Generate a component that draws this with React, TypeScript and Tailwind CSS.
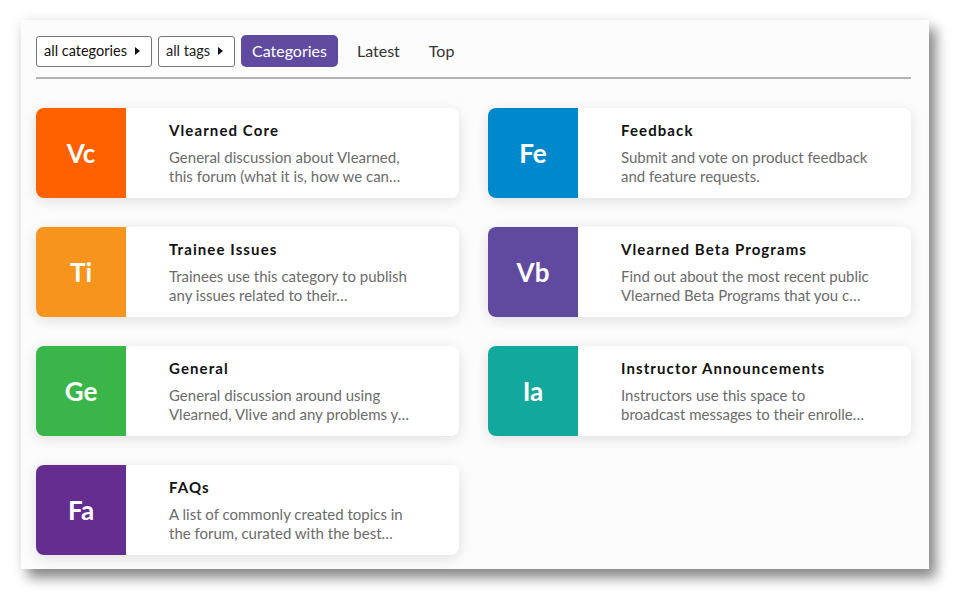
import React from "react";

const categories = [
  { abbr: "Vc", color: "bg-[#ff6000]", title: "Vlearned Core", desc: "General discussion about Vlearned, this forum (what it is, how we can…" },
  { abbr: "Fe", color: "bg-[#0088cc]", title: "Feedback", desc: "Submit and vote on product feedback and feature requests." },
  { abbr: "Ti", color: "bg-[#f7941d]", title: "Trainee Issues", desc: "Trainees use this category to publish any issues related to their…" },
  { abbr: "Vb", color: "bg-[#604a9f]", title: "Vlearned Beta Programs", desc: "Find out about the most recent public Vlearned Beta Programs that you c…" },
  { abbr: "Ge", color: "bg-[#3ab54a]", title: "General", desc: "General discussion around using Vlearned, Vlive and any problems y…" },
  { abbr: "Ia", color: "bg-[#12a89d]", title: "Instructor Announcements", desc: "Instructors use this space to broadcast messages to their enrolle…" },
  { abbr: "Fa", color: "bg-[#652d90]", title: "FAQs", desc: "A list of commonly created topics in the forum, curated with the best…" },
];

function Caret() {
  return (
    <svg width="5" height="8" viewBox="0 0 5 8" className="ml-[8px]">
      <path d="M0 0 L5 4 L0 8 Z" fill="#111" />
    </svg>
  );
}

export default function App() {
  return (
    <div
      className="w-[965px] h-[605px] bg-white pt-[20px] pl-[21px]"
      style={{ fontFamily: "Lato, 'Noto Sans', sans-serif" }}
    >
      <div className="w-[908px] h-[549px] bg-[#fcfcfc] pl-[15px] pr-[18px] pt-[15px] shadow-[7px_9px_12px_rgba(0,0,0,0.45),0_0_14px_rgba(0,0,0,0.08)]">
        {/* Nav */}
        <div className="flex items-center h-[32px]">
          <button className="h-[31px] flex items-center pl-[7px] pr-[11px] border border-[#777] rounded-[3px] bg-white text-[14.5px] text-[#111]">
            all categories
            <Caret />
          </button>
          <button className="h-[31px] ml-[6px] flex items-center pl-[7px] pr-[11px] border border-[#777] rounded-[3px] bg-white text-[14.5px] text-[#222]">
            all tags
            <Caret />
          </button>
          <button className="h-[32px] ml-[6px] px-[11px] rounded-[5px] bg-[#604a9f] text-white text-[16px] leading-[30px]">
            Categories
          </button>
          <span className="ml-[19px] text-[16px] text-[#333]">Latest</span>
          <span className="ml-[29px] text-[16px] text-[#333]">Top</span>
        </div>
        <div className="mt-[10px] h-[2px] bg-[#b3b3b3]" />

        {/* Categories */}
        <div className="grid grid-cols-2 gap-x-[29px] gap-y-[29px] mt-[29px]">
          {categories.map((c) => (
            <div
              key={c.abbr}
              className="h-[90px] flex bg-white rounded-[8px] overflow-hidden shadow-[0_3px_14px_rgba(0,0,0,0.12)]"
            >
              <div className={`${c.color} w-[90px] shrink-0 flex items-center justify-center text-white text-[26px] font-bold`}>
                {c.abbr}
              </div>
              <div className="pl-[43px] pt-[12px]">
                <div className="text-[15px] font-bold tracking-[1.1px] text-[#111] leading-[20px]">
                  {c.title}
                </div>
                <div className="mt-[8px] w-[250px] text-[15px] leading-[19px] text-[#6b6b6b]">
                  {c.desc}
                </div>
              </div>
            </div>
          ))}
        </div>
      </div>
    </div>
  );
}
